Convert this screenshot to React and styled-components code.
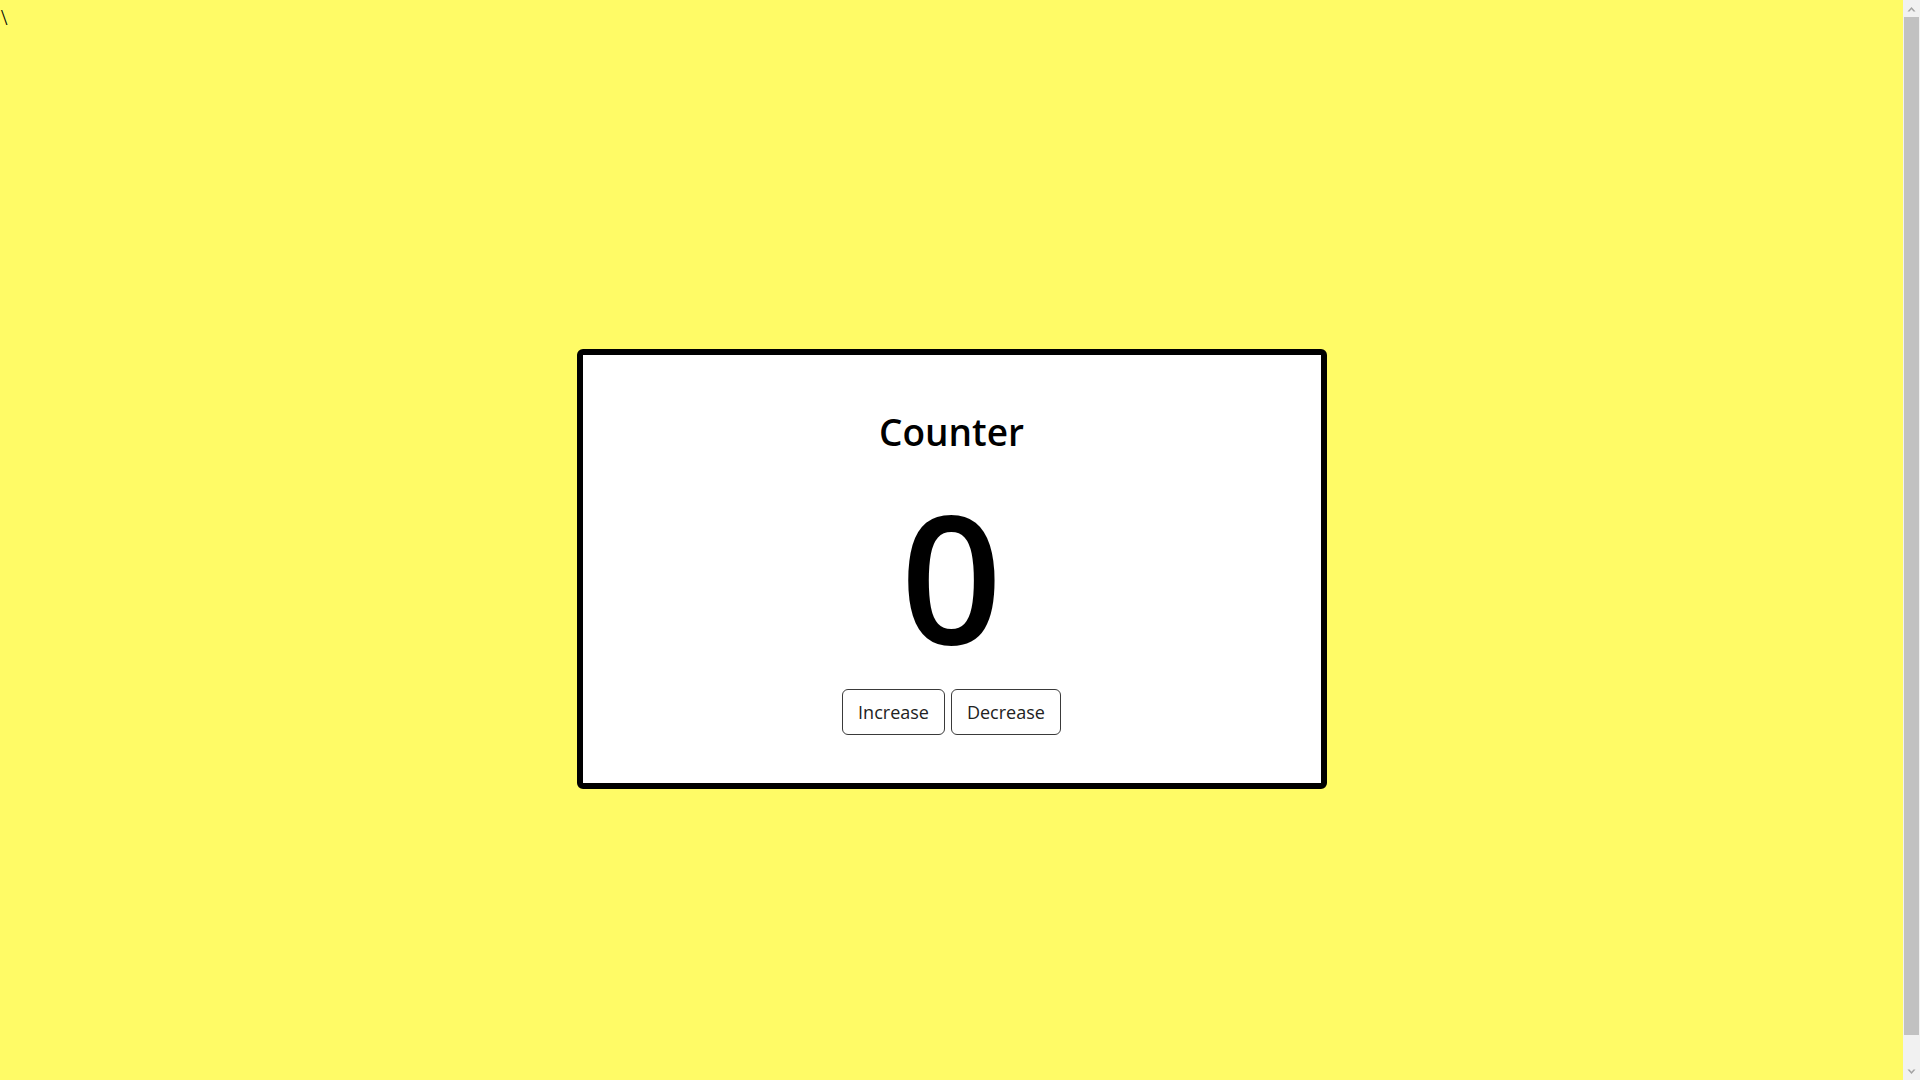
import React, { useState } from 'react';
import styled, { createGlobalStyle } from 'styled-components';

const GlobalStyle = createGlobalStyle`
  html, body {
    margin: 0;
    padding: 0;
    background: #fffb66;
  }
  body {
    padding-right: 17px;
    font-family: "Open Sans", "Noto Sans", sans-serif;
    color: #000;
  }
`;

const Stray = styled.div`
  height: 29px;
  padding-left: 1px;
  font-family: "Liberation Serif", serif;
  font-size: 23px;
  line-height: 36px;
`;

const Screen = styled.main`
  height: 100vh;
  display: flex;
  align-items: center;
  justify-content: center;
`;

const Card = styled.section`
  box-sizing: border-box;
  width: 750px;
  padding: 51px 0 48px;
  background: #fff;
  border: 6px solid #000;
  border-radius: 6px;
  display: flex;
  flex-direction: column;
  align-items: center;
`;

const Title = styled.h1`
  margin: 0;
  font-size: 37px;
  font-weight: 600;
  line-height: 52px;
`;

const Count = styled.div`
  margin: 28px 0 25px;
  font-size: 178px;
  font-weight: 600;
  line-height: 178px;
`;

const Buttons = styled.div`
  display: flex;
  gap: 6px;
`;

const Button = styled.button`
  font-family: inherit;
  font-size: 18px;
  line-height: 28px;
  padding: 8px 15px;
  background: #fff;
  color: #222;
  border: 1px solid #3a3a3a;
  border-radius: 6px;
  cursor: pointer;
`;

const Scrollbar = styled.div`
  position: fixed;
  top: 0;
  right: 0;
  width: 17px;
  height: 100vh;
  background: #f1f1f1;
  display: flex;
  flex-direction: column;
`;

const Arrow = styled.div`
  height: 17px;
  display: flex;
  align-items: center;
  justify-content: center;
`;

const Thumb = styled.div`
  flex: 1;
  margin: 0 1px 28px;
  background: #c1c1c1;
`;

function ArrowIcon({ down }) {
  return (
    <svg width="9" height="6" viewBox="0 0 9 6">
      <path
        d={down ? 'M0.5 0.5 L4.5 5 L8.5 0.5 L6.5 0.5 L4.5 2.8 L2.5 0.5 Z' : 'M0.5 5.5 L4.5 1 L8.5 5.5 L6.5 5.5 L4.5 3.2 L2.5 5.5 Z'}
        fill="#a3a3a3"
      />
    </svg>
  );
}

export default function App() {
  const [count, setCount] = useState(0);

  return (
    <>
      <GlobalStyle />
      <Stray>\</Stray>
      <Screen>
        <Card>
          <Title>Counter</Title>
          <Count>{count}</Count>
          <Buttons>
            <Button onClick={() => setCount(count + 1)}>Increase</Button>
            <Button onClick={() => setCount(count - 1)}>Decrease</Button>
          </Buttons>
        </Card>
      </Screen>
      <Scrollbar>
        <Arrow><ArrowIcon /></Arrow>
        <Thumb />
        <Arrow><ArrowIcon down /></Arrow>
      </Scrollbar>
    </>
  );
}
